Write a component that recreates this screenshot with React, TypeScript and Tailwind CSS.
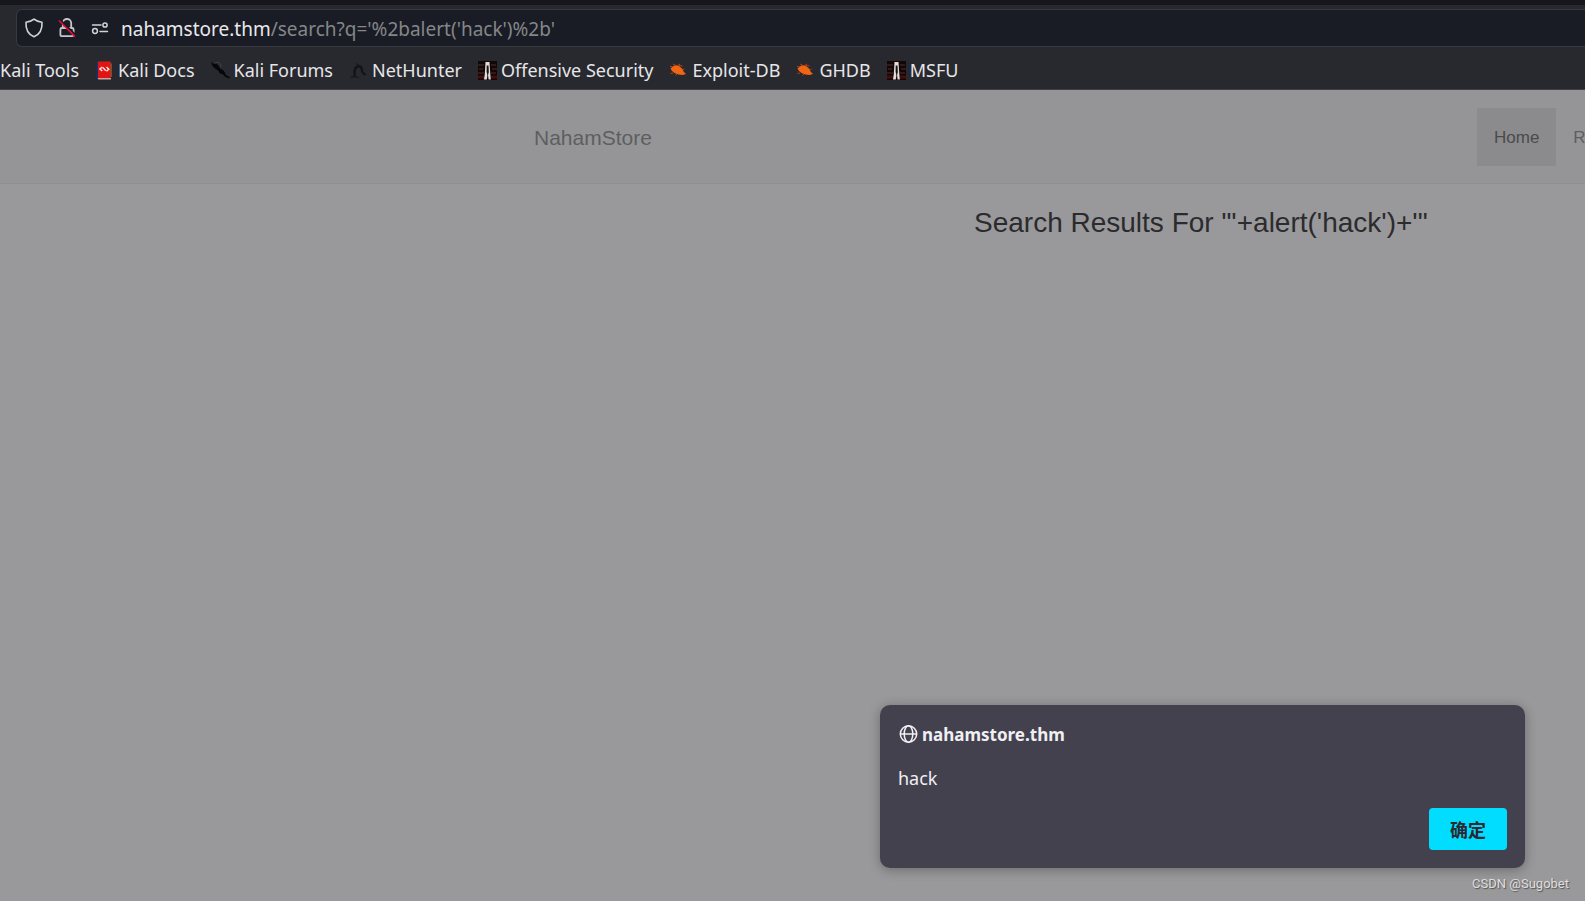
import React from "react";

type IconProps = { className?: string };

const ShieldIcon = ({ className }: IconProps) => (
  <svg viewBox="0 0 20 20" className={className} fill="none" stroke="#d2d2d6" strokeWidth="1.6" strokeLinejoin="round" aria-hidden="true">
    <path d="M10 1.2 C8 3 5 3.9 2 4.2 C1.6 10.5 4.2 16.3 10 18.8 C15.8 16.3 18.4 10.5 18 4.2 C15 3.9 12 3 10 1.2 Z" />
  </svg>
);

const InsecureIcon = ({ className }: IconProps) => (
  <svg viewBox="0 0 20 20" className={className} fill="none" aria-hidden="true">
    <path d="M5.8 10 V5.2 a4.2 4.2 0 0 1 8.4 0 V10" stroke="#c6c6ca" strokeWidth="1.8" />
    <rect x="3.4" y="10" width="13.2" height="8.2" rx="1.5" stroke="#c6c6ca" strokeWidth="1.8" />
    <path d="M3.4 2.4 L18.6 17.4" stroke="#191b22" strokeWidth="2.6" />
    <path d="M2 2.5 L18 18.6" stroke="#e0103c" strokeWidth="1.5" />
  </svg>
);

const PermissionsIcon = ({ className }: IconProps) => (
  <svg viewBox="0 0 18 18" className={className} fill="none" stroke="#d2d2d6" strokeWidth="1.5" strokeLinecap="round" aria-hidden="true">
    <path d="M1.5 6 H10" />
    <circle cx="14" cy="6" r="2.1" />
    <circle cx="4" cy="12" r="2.4" />
    <path d="M9 12.5 H16.5" />
  </svg>
);

const DocsIcon = ({ className }: IconProps) => (
  <svg viewBox="0 0 19 19" className={className} aria-hidden="true">
    <path d="M1.5 1 H6 V18 H2.5 L1.5 17 Z" fill="#16306b" />
    <path d="M15 1 L16.8 3 V16 H15 Z" fill="#80602e" />
    <rect x="3" y="0.5" width="12.5" height="16.5" fill="#e01414" />
    <path d="M2.5 17 H16 V18.5 H3.5 Z" fill="#c9a4a4" />
    <path d="M7.3 6 L4.9 8 L7.3 10 M11.5 6 L13.8 8.3 L11.5 10.3 M7.8 6.5 L10.8 9.8" fill="none" stroke="#ffe4e0" strokeWidth="1.4" />
  </svg>
);

const ForumsIcon = ({ className }: IconProps) => (
  <svg viewBox="0 0 19 19" className={className} fill="#060608" aria-hidden="true">
    <path d="M0 1 L3 3 L5.5 2.5 L8.5 6 L9 7.5 L12 9 L14 11.5 L14.5 13.5 L19 16.5 L18.5 17.5 L14.5 16 L12 13.5 L8.5 12 L7 9.5 L4 7.5 L1.5 5 Z" />
    <path d="M4 2 L7.5 1 L10 4 L9.6 6.5" fill="none" stroke="#46474c" strokeWidth="0.8" />
  </svg>
);

const NetHunterIcon = ({ className }: IconProps) => (
  <svg viewBox="0 0 19 19" className={className} fill="none" aria-hidden="true">
    <path d="M5.5 15.5 C6 11.5 4.3 9 7.5 6 C10.5 4 13 6 12.8 8.5 C12.5 11 14 12.2 16.5 14" stroke="#131417" strokeWidth="2.5" />
    <path d="M1.5 16.5 C5 14.5 8 17 10 16 M7.5 2.5 L10.5 5" stroke="#18191c" strokeWidth="1.3" />
  </svg>
);

const OffsecIcon = ({ className }: IconProps) => (
  <svg viewBox="0 0 19 19" className={className} aria-hidden="true">
    <rect width="19" height="19" fill="#120607" />
    <path d="M0 4 H6 M1 8 H5 M0 12 H6 M13 4 H18 M14 8 H19 M13 12 H18" stroke="#4d3030" strokeWidth="1.2" />
    <path d="M0 16 H6 M13 16 H19" stroke="#4a0b0d" strokeWidth="3" />
    <path d="M7.5 1 H11.5 L12.3 13 L12.8 18.5 H10.6 L9.8 12 L8.8 18.5 H6 L6.8 13 Z" fill="#e2dedc" />
    <path d="M8.7 4.5 H10.5 L10.8 11 L9.8 15 L8.6 11 Z" fill="#191415" />
  </svg>
);

const BugIcon = ({ className }: IconProps) => (
  <svg viewBox="0 0 19 19" className={className} aria-hidden="true">
    <path d="M1 5.5 L5 6 M4 3 L8 5 L11 3 M10 4.5 L13.5 5 M4 12 L1.5 12.5 M8 13 L6.5 14.5 M14 8.5 L15.5 8" fill="none" stroke="#c94d11" strokeWidth="0.8" />
    <path d="M1.5 7.5 L5.5 4.5 L10 5 L13.5 8 L14.5 10.5 L17 13 L13.5 14 L9.5 13.5 L5.5 12 L3 10 Z" fill="#f26513" />
  </svg>
);

const GlobeIcon = ({ className }: IconProps) => (
  <svg viewBox="0 0 20 20" className={className} fill="none" stroke="#f2f1f5" strokeWidth="1.5" aria-hidden="true">
    <circle cx="10.5" cy="9" r="8.2" />
    <ellipse cx="10.5" cy="9" rx="4.3" ry="8.2" />
    <path d="M2.3 9 H18.7" />
  </svg>
);

const bookmarks = [
  { label: "Kali Docs", Icon: DocsIcon },
  { label: "Kali Forums", Icon: ForumsIcon },
  { label: "NetHunter", Icon: NetHunterIcon },
  { label: "Offensive Security", Icon: OffsecIcon },
  { label: "Exploit-DB", Icon: BugIcon },
  { label: "GHDB", Icon: BugIcon },
  { label: "MSFU", Icon: OffsecIcon },
];

function BrowserChrome() {
  return (
    <header className="border-t-[5px] border-b border-t-[#16171c] border-b-[#414247] bg-[#28292e]">
      <div className="pt-1 pl-4">
        <div className="flex h-[38px] items-center rounded-l-md border border-r-0 border-[#383a40] bg-[#191c24] pl-[7px] text-[19px]">
          <button type="button" aria-label="Tracking protection" className="mr-[13px]">
            <ShieldIcon className="size-5" />
          </button>
          <button type="button" aria-label="Connection security" className="mr-3.5">
            <InsecureIcon className="size-5" />
          </button>
          <button type="button" aria-label="Permissions" className="mr-3">
            <PermissionsIcon className="size-[18px]" />
          </button>
          <label htmlFor="address" className="pt-0.5 text-[#e9e9ec]">
            nahamstore.thm
          </label>
          <input
            id="address"
            type="text"
            defaultValue="/search?q='%2balert('hack')%2b'"
            className="min-w-0 flex-1 bg-transparent pt-0.5 text-[#85868a] outline-none"
          />
        </div>
      </div>
      <nav aria-label="Bookmarks" className="flex h-[42px] items-center gap-4 overflow-hidden pt-1 text-[18px] whitespace-nowrap text-[#e6e6e9]">
        <a href="#">Kali Tools</a>
        {bookmarks.map(({ label, Icon }) => (
          <a key={label} href="#" className="flex items-center gap-1">
            <Icon className="size-[19px] shrink-0" />
            {label}
          </a>
        ))}
      </nav>
    </header>
  );
}

function AlertDialog() {
  return (
    <section
      role="alertdialog"
      aria-labelledby="alert-title"
      aria-describedby="alert-text"
      className="absolute right-[60px] bottom-[33px] flex w-[645px] flex-col rounded-[10px] bg-[#44414e] p-[18px] text-[#f0eff4] shadow-[0_2px_12px_rgba(0,0,0,0.3)]"
    >
      <h2 id="alert-title" className="flex h-6 items-center gap-1 text-[17px] font-bold">
        <GlobeIcon className="size-5" />
        nahamstore.thm
      </h2>
      <p id="alert-text" className="mt-[19px] h-6 text-[18px] leading-6">
        hack
      </p>
      <button
        type="button"
        className="mt-[18px] h-[42px] self-end rounded bg-[#00ddff] px-[21px] font-['Noto_Sans_CJK_SC',sans-serif] text-[18px] font-bold text-[#2b2a33]"
      >
        确定
      </button>
    </section>
  );
}

export default function App() {
  return (
    <div className="relative flex min-h-screen flex-col overflow-hidden bg-[#99999b] font-['Noto_Sans',sans-serif]">
      <BrowserChrome />
      <div className="flex-1 font-['Liberation_Sans',sans-serif]">
        <nav aria-label="Store" className="flex h-[94px] items-center justify-between overflow-hidden border-b border-[#8f8f91] bg-[#959597] pl-[534px] whitespace-nowrap">
          <a href="#" className="pt-0.5 text-[21px] text-[#5e5e60]">
            NahamStore
          </a>
          <div className="flex w-[108px] shrink-0 text-[17px]">
            <a href="#" aria-current="page" className="flex h-[58px] shrink-0 items-center bg-[#8b8b8d] px-[17px] pt-0.5 text-[#4a4a4c]">
              Home
            </a>
            <a href="#" className="flex h-[58px] shrink-0 items-center px-[17px] pt-0.5 text-[#5e5e60]">
              R
            </a>
          </div>
        </nav>
        <main>
          <h1 className="pt-[19px] pl-[974px] text-[28px] leading-10 whitespace-nowrap text-[#2b2b2d]">
            Search Results For "'+alert('hack')+'"
          </h1>
        </main>
      </div>
      <AlertDialog />
      <p className="absolute right-4 bottom-[7px] font-[Roboto,sans-serif] text-[13px] leading-5 text-[#dededf] [text-shadow:1px_1px_1px_#555]">
        CSDN @Sugobet
      </p>
    </div>
  );
}
